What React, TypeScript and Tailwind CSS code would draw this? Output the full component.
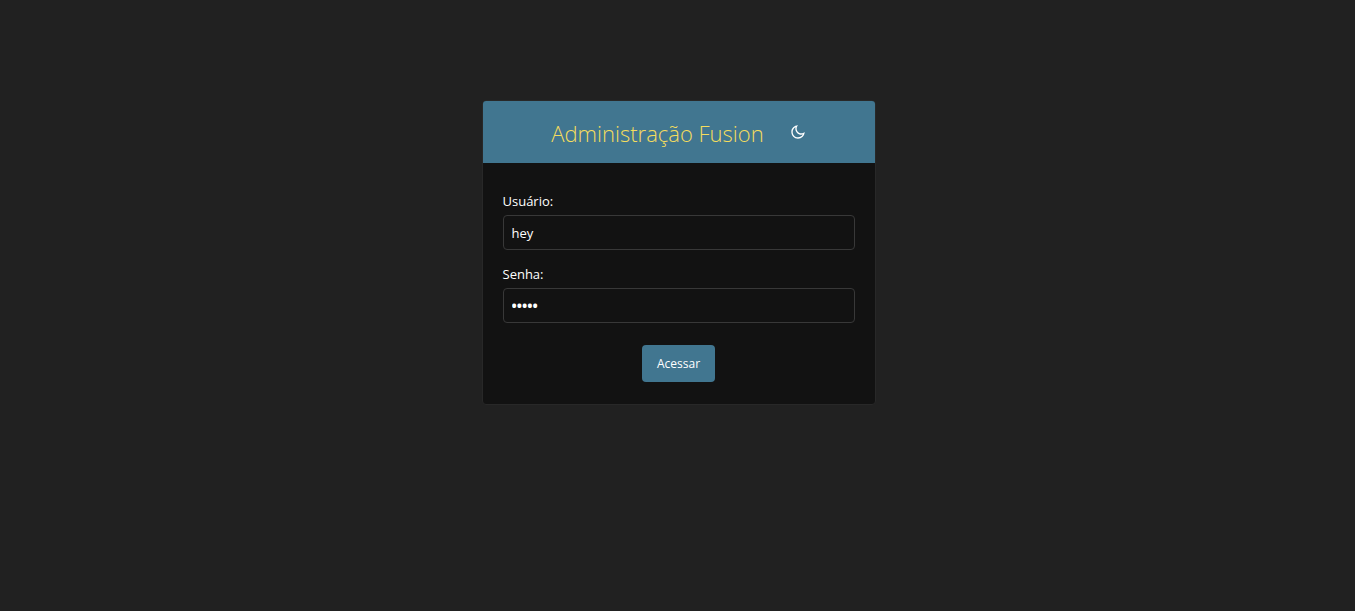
import React from 'react';

function MoonIcon() {
  return (
    <svg viewBox="0 0 24 24" className="size-4" fill="currentColor" aria-hidden="true">
      <path d="M10 7C10 10.866 13.134 14 17 14C18.9584 14 20.729 13.1957 21.9995 11.8995C22 11.933 22 11.9665 22 12C22 17.5228 17.5228 22 12 22C6.47715 22 2 17.5228 2 12C2 6.47715 6.47715 2 12 2C12.0335 2 12.067 2 12.1005 2.00049C10.8043 3.27098 10 5.04157 10 7ZM4 12C4 16.4183 7.58172 20 12 20C15.0583 20 17.7158 18.2839 19.062 15.7621C18.3945 15.9187 17.7035 16 17 16C12.0294 16 8 11.9706 8 7C8 6.29648 8.08133 5.60547 8.2379 4.938C5.71611 6.28423 4 8.9417 4 12Z" />
    </svg>
  );
}

const fieldClass =
  'mt-1 block h-[35px] w-full rounded border border-[#383838] bg-[#121212] px-2 text-white outline-none focus:border-[#417690]';

export default function App() {
  return (
    <div className="min-h-screen bg-[#212121] pt-[100px] pr-4 pb-10 pl-[18px] font-['Open_Sans','Noto_Sans',sans-serif] text-[13px] text-white">
      <main className="mx-auto w-full max-w-[394px] overflow-hidden rounded border border-[#282828] bg-[#121212]">
        <header className="flex h-[62px] items-center justify-center gap-[26px] bg-[#417690]">
          <h1 className="pt-0.5 text-[22px] leading-8 font-light text-[#f5dd5d]">Administração Fusion</h1>
          <button type="button" aria-label="Alternar tema">
            <MoonIcon />
          </button>
        </header>
        <form className="px-5 pt-7 pb-[22px]" onSubmit={(e) => e.preventDefault()}>
          <div>
            <label htmlFor="username" className="block leading-5">Usuário:</label>
            <input id="username" type="text" defaultValue="hey" className={`${fieldClass} text-[13px]`} />
          </div>
          <div className="mt-[14px]">
            <label htmlFor="password" className="block leading-5">Senha:</label>
            <input id="password" type="password" defaultValue="12345" className={`${fieldClass} text-sm font-bold`} />
          </div>
          <div className="mt-[22px] flex justify-center">
            <button type="submit" className="h-[37px] rounded bg-[#417690] px-[15px] text-xs">Acessar</button>
          </div>
        </form>
      </main>
    </div>
  );
}
